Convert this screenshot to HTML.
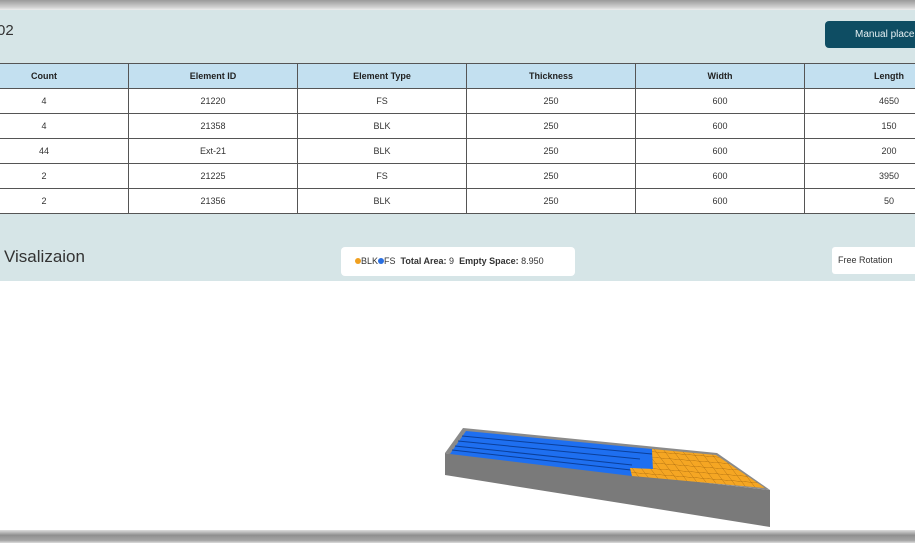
<!DOCTYPE html>
<html><head><meta charset="utf-8"><style>
body{margin:0;width:915px;height:543px;overflow:hidden;background:#fff;font-family:"Liberation Sans",Arial,sans-serif;position:relative}
.topbar{position:absolute;left:0;top:0;width:915px;height:10px;background:linear-gradient(#9a9a9a,#cfcfcf 70%,#eee)}
.panel{position:absolute;left:0;top:10px;width:915px;height:271px;background:#d6e5e7}
.title{position:absolute;left:-3px;top:22px;font-size:15px;color:#333}
.btn{position:absolute;left:825px;top:21px;width:110px;height:27px;background:#0e4d63;border-radius:4px;color:#e6f0f3;font-size:10px;line-height:27px;padding-left:30px;box-sizing:border-box;white-space:nowrap;overflow:hidden}
table{position:absolute;left:-41px;top:63px;border-collapse:collapse;font-size:9px;color:#333;table-layout:fixed;width:1013px}
td,th{width:168px;border:1px solid #555;text-align:center;height:24px;padding:0;background:#fff}
th{background:#c3e0f0;font-weight:bold;color:#222}
.vis{position:absolute;left:4px;top:247px;font-size:17px;color:#333}
.legend{position:absolute;left:341px;top:247px;width:234px;height:29px;background:#fff;border-radius:4px;font-size:9px;line-height:29px;padding-left:14px;box-sizing:border-box;color:#333}
.dot{display:inline-block;width:6px;height:6px;border-radius:50%;vertical-align:0}
.rot{position:absolute;left:832px;top:247px;width:100px;height:27px;background:#fff;border-radius:3px;font-size:9px;line-height:27px;padding-left:6px;color:#333}
.botbar{position:absolute;left:0;top:530px;width:915px;height:13px;background:linear-gradient(#ddd,#8f8f8f 40%,#a5a5a5 80%,#ddd)}
</style></head><body>
<div class="topbar"></div>
<div class="panel"></div>
<div class="title">02</div>
<div class="btn">Manual placement</div>
<table>
<tr><th>Count</th><th>Element ID</th><th>Element Type</th><th>Thickness</th><th>Width</th><th>Length</th></tr>
<tr><td>4</td><td>21220</td><td>FS</td><td>250</td><td>600</td><td>4650</td></tr>
<tr><td>4</td><td>21358</td><td>BLK</td><td>250</td><td>600</td><td>150</td></tr>
<tr><td>44</td><td>Ext-21</td><td>BLK</td><td>250</td><td>600</td><td>200</td></tr>
<tr><td>2</td><td>21225</td><td>FS</td><td>250</td><td>600</td><td>3950</td></tr>
<tr><td>2</td><td>21356</td><td>BLK</td><td>250</td><td>600</td><td>50</td></tr>
</table>
<div class="vis">Visalizaion</div>
<div class="legend"><span class="dot" style="background:#f0a020"></span>BLK<span class="dot" style="background:#2a6fe0"></span>FS &nbsp;<b>Total Area:</b> 9 &nbsp;<b>Empty Space:</b> 8.950</div>
<div class="rot">Free Rotation</div>
<svg style="position:absolute;left:0;top:0" width="915" height="543">
<defs>
<pattern id="og" width="9" height="6" patternUnits="userSpaceOnUse" patternTransform="skewX(40) rotate(5)"><rect width="9" height="6" fill="#f5a623"/><path d="M0 0H9M0 0V6" stroke="#a86a10" stroke-width="0.8"/></pattern>
</defs>
<polygon points="445,453 770,490 770,527 445,475" fill="#7a7a7a"/>
<polygon points="463,428 717,453 770,490 445,453" fill="#8a8a8a"/>
<polygon points="466,431 652,449 653,469 630,468 632,476 450,454" fill="#1e6ff0"/>
<path d="M462,436 L652,454 M458,441 L640,459 M455,446 L632,465 M452,450 L631,470" stroke="#0b3f9a" stroke-width="1"/>
<polygon points="652,449 716,455 765,488 632,476 630,468 653,469" fill="url(#og)"/>
</svg>
<div class="botbar"></div>
</body></html>
